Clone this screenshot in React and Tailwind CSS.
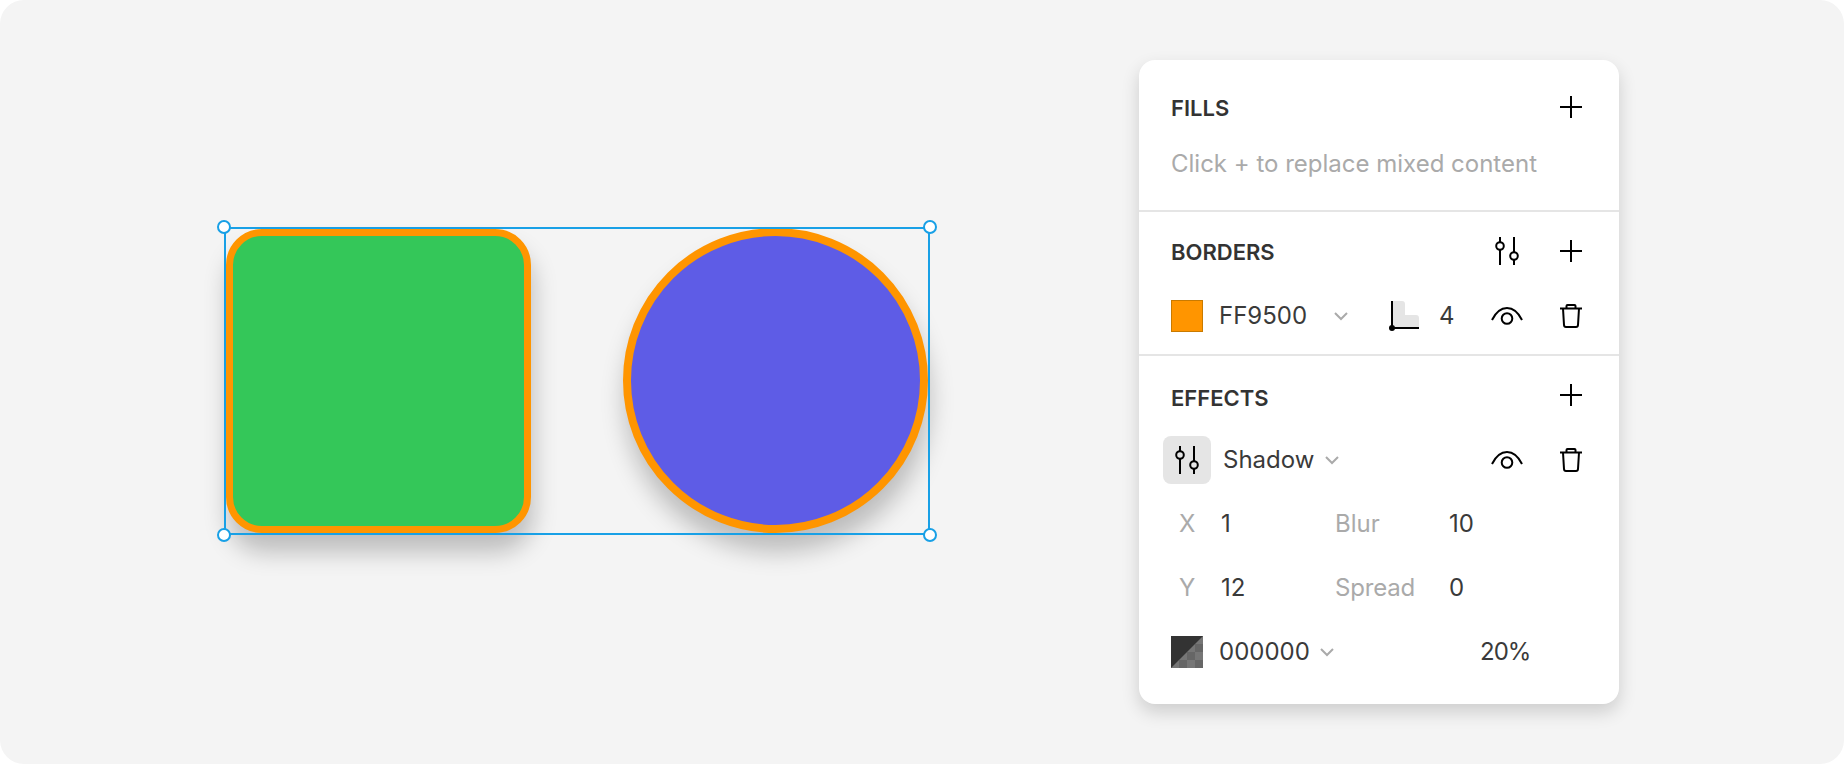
const Plus = () => (
  <svg width="22" height="22" viewBox="0 0 22 22" fill="none" stroke="#000" strokeWidth="2">
    <path d="M11 0V22M0 11H22" />
  </svg>
);

const Sliders = () => (
  <svg width="24" height="28" viewBox="0 0 24 28" fill="none" stroke="#000" strokeWidth="2">
    <path d="M5 0V28M19 0V28" />
    <circle cx="5" cy="9" r="3.8" fill="#fff" />
    <circle cx="19" cy="19" r="3.8" fill="#fff" />
  </svg>
);

const Eye = () => (
  <svg width="32" height="20" viewBox="0 0 32 20" fill="none" stroke="#000" strokeWidth="2">
    <path d="M1 14C5 6 11 2 16 2C21 2 27 6 31 14" />
    <circle cx="16" cy="12.5" r="5.3" />
  </svg>
);

const Trash = () => (
  <svg width="22" height="24" viewBox="0 0 22 24" fill="none" stroke="#000" strokeWidth="2">
    <path d="M0 4.5H22M6.500 4.500V2Q6.500 1 7.500 1H14.500Q15.500 1 15.500 2V4.500M3 4.500L4 21Q4.100 23 6 23H16Q17.900 23 18 21L19 4.500" />
  </svg>
);

const Chevron = () => (
  <svg width="14" height="9" viewBox="0 0 14 9" fill="none" stroke="#aaaaaa" strokeWidth="2">
    <path d="M1 1L7 7L13 1" />
  </svg>
);

const Corner = () => (
  <svg width="30" height="30" viewBox="0 0 30 30">
    <path d="M3 0H13Q16 0 16 3V14H27Q30 14 30 17V26H3Z" fill="#e5e5e5" />
    <path d="M3 0V27H30" fill="none" stroke="#000" strokeWidth="2" />
    <circle cx="3" cy="27" r="3" fill="#000" />
  </svg>
);

const Checker = () => (
  <svg width="32" height="32" viewBox="0 0 32 32">
    <defs>
      <pattern id="checks" width="16" height="16" patternUnits="userSpaceOnUse">
        <rect width="16" height="16" fill="#767676" />
        <rect width="8" height="8" fill="#666666" />
        <rect x="8" y="8" width="8" height="8" fill="#666666" />
      </pattern>
    </defs>
    <rect width="32" height="32" fill="#333333" />
    <path d="M32 0V32H0Z" fill="url(#checks)" />
  </svg>
);

const Handle = ({ className }) => (
  <div className={`absolute w-[14px] h-[14px] rounded-full bg-white border-2 border-[#18a0e6] ${className}`} />
);

const Title = ({ children, className }) => (
  <span className={`text-[22px] font-semibold text-[#333333] ${className}`}>{children}</span>
);

export default function App() {
  return (
    <div
      className="relative w-[1844px] h-[764px] bg-[#f4f4f4] rounded-[24px] overflow-hidden flex justify-end items-start pt-[60px] pr-[225px] text-[24px] leading-[30px] text-[#3a3a3a]"
      style={{ fontFamily: '"Inter", "Liberation Sans", sans-serif' }}
    >
      <div className="absolute left-[226px] top-[229px] w-[305px] h-[304px] rounded-[36px] bg-[#34c759] border-[7px] border-[#ff9500] shadow-[2px_19px_24px_rgba(0,0,0,0.23)]" />
      <div className="absolute left-[623px] top-[228px] w-[305px] h-[305px] rounded-full bg-[#5e5ce6] border-[8px] border-[#ff9500] shadow-[2px_19px_24px_rgba(0,0,0,0.23)]" />
      <div className="absolute left-[224px] top-[227px] w-[706px] h-[308px] border-2 border-[#18a0e6]" />
      <Handle className="left-[217px] top-[220px]" />
      <Handle className="left-[923px] top-[220px]" />
      <Handle className="left-[217px] top-[528px]" />
      <Handle className="left-[923px] top-[528px]" />

      <div className="relative w-[480px] h-[644px] bg-white rounded-[16px] shadow-[0_8px_18px_rgba(0,0,0,0.16)] flex flex-col overflow-hidden">
        <section className="h-[150px] px-[32px] pt-[32px]">
          <div className="flex items-center justify-between h-[30px] pr-[5px]">
            <Title className="mt-[2px]">FILLS</Title>
            <Plus />
          </div>
          <div className="mt-[27px] text-[#aaaaaa]">Click + to replace mixed content</div>
        </section>
        <div className="h-[2px] bg-[#e5e5e5]" />
        <section className="h-[142px] px-[32px] pt-[24px]">
          <div className="flex items-center h-[30px] pr-[5px]">
            <Title className="mt-[2px]">BORDERS</Title>
            <div className="ml-auto mr-[41px]"><Sliders /></div>
            <Plus />
          </div>
          <div className="flex items-center mt-[34px] h-[32px]">
            <div className="w-[32px] h-[32px] bg-[#ff9500] border border-[#c97a00]" />
            <span className="ml-[16px] w-[115px]">FF9500</span>
            <span className="w-[55px] flex"><Chevron /></span>
            <span className="w-[50px] flex"><Corner /></span>
            <span className="w-[52px]">4</span>
            <span className="w-[69px] flex"><Eye /></span>
            <Trash />
          </div>
        </section>
        <div className="h-[2px] bg-[#e5e5e5]" />
        <section className="flex-1 px-[32px] pt-[24px]">
          <div className="flex items-center justify-between h-[30px] pr-[5px]">
            <Title className="mt-[5px]">EFFECTS</Title>
            <Plus />
          </div>
          <div className="flex items-center mt-[26px] h-[48px] -ml-[8px]">
            <div className="w-[48px] h-[48px] rounded-[8px] bg-[#e5e5e5] flex items-center justify-center">
              <svg width="24" height="28" viewBox="0 0 24 28" fill="none" stroke="#000" strokeWidth="2">
                <path d="M5 0V28M19 0V28" />
                <circle cx="5" cy="9" r="3.8" fill="#e5e5e5" />
                <circle cx="19" cy="19" r="3.8" fill="#e5e5e5" />
              </svg>
            </div>
            <span className="ml-[12px] w-[102px]">Shadow</span>
            <span className="w-[166px] flex"><Chevron /></span>
            <span className="w-[69px] flex"><Eye /></span>
            <Trash />
          </div>
          <div className="flex items-center mt-[24px] h-[32px]">
            <span className="w-[50px] pl-[8px] text-[#aaaaaa]">X</span>
            <span className="w-[114px]">1</span>
            <span className="w-[114px] text-[#aaaaaa]">Blur</span>
            <span>10</span>
          </div>
          <div className="flex items-center mt-[32px] h-[32px]">
            <span className="w-[50px] pl-[8px] text-[#aaaaaa]">Y</span>
            <span className="w-[114px]">12</span>
            <span className="w-[114px] text-[#aaaaaa] tracking-[-0.2px]">Spread</span>
            <span>0</span>
          </div>
          <div className="flex items-center mt-[32px] h-[32px]">
            <Checker />
            <span className="ml-[16px] w-[101px]">000000</span>
            <span className="w-[160px] flex"><Chevron /></span>
            <span className="tracking-[-1px]">20%</span>
          </div>
        </section>
      </div>
    </div>
  );
}
